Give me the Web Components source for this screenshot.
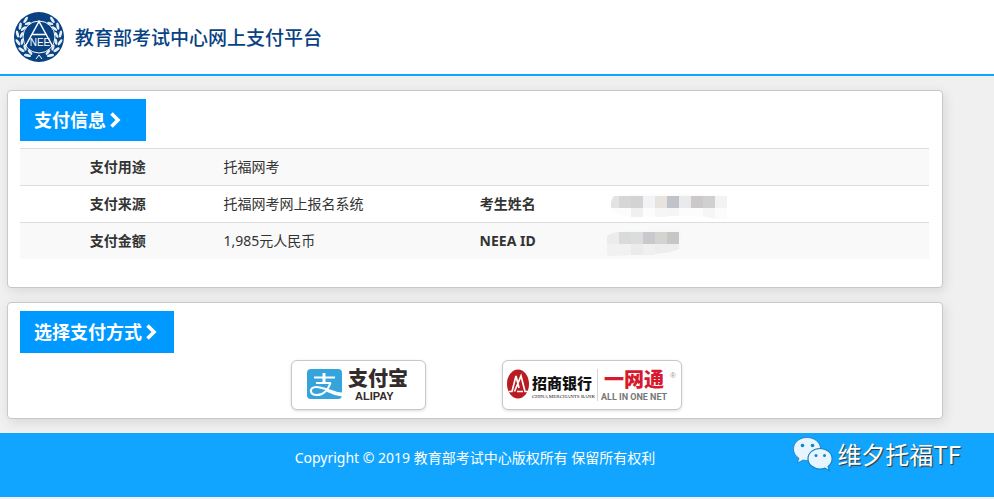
<!DOCTYPE html>
<html lang="zh-CN">
<head>
<meta charset="utf-8">
<meta name="viewport" content="width=device-width, initial-scale=1">
<title>教育部考试中心网上支付平台</title>
<style>
    body {
        margin: 0;
        background: #f0f0f0;
        color: #333;
        font: 14px/20px "Noto Sans", "Noto Sans CJK SC", sans-serif;
    }

    main {
        display: grid;
        gap: 14px;
        padding: 14px 51px 14px 7px;
    }
</style>
</head>
<body>
    <site-header>教育部考试中心网上支付平台</site-header>
    <main>
        <pay-panel heading="支付信息">
            <pay-details></pay-details>
        </pay-panel>
        <pay-panel heading="选择支付方式">
            <pay-methods></pay-methods>
        </pay-panel>
    </main>
    <site-footer>
        Copyright © 2019 教育部考试中心版权所有 保留所有权利
        <wechat-mark slot="mark">维夕托福TF</wechat-mark>
    </site-footer>

<script>
class BaseElement extends HTMLElement {
    constructor() {
        super();
        this.attachShadow({ mode: 'open' });
    }

    connectedCallback() {
        this.shadowRoot.innerHTML = this.template();
    }
}

class SiteHeader extends BaseElement {
    // one side of the wreath, the other side is mirrored
    leaves() {
        let out = '';
        for (let i = 0; i < 6; i++) {
            const angle = 24 + i * 22;
            out += `<g transform="rotate(${angle} 25 25)">
                <ellipse cx="23" cy="42.500" rx="3.200" ry="1.300" transform="rotate(28 23 42.500)"/>
                <ellipse cx="22" cy="46.500" rx="3.600" ry="1.400" transform="rotate(-12 22 46.500)"/>
            </g>`;
        }
        return out;
    }

    template() {
        return `
            <style>
                :host {
                    display: block;
                    background: #fff;
                    border-bottom: 2px solid #12a5ff;
                }

                .brand {
                    display: flex;
                    align-items: center;
                    gap: 11px;
                    padding: 12px 14px;
                    color: #084282;
                }

                h1 {
                    margin: 0;
                    font-size: 19px;
                    line-height: 28px;
                    font-weight: 500;
                    font-family: "Noto Sans CJK SC", sans-serif;
                }

                svg {
                    display: block;
                }
            </style>
            <div class="brand">
                <svg width="50" height="50" viewBox="0 0 50 50" aria-hidden="true">
                    <circle cx="25" cy="25" r="25" fill="#084282"/>
                    <g fill="#e6eef5">
                        ${this.leaves()}
                        <g transform="translate(50 0) scale(-1 1)">${this.leaves()}</g>
                    </g>
                    <g fill="none" stroke="#fff">
                        <circle cx="25" cy="25" r="16" fill="#084282" stroke-width="1"/>
                        <path d="M11.500 34L25 9.500l13.500 24.500M18.500 22.500h13" stroke-width="1.500"/>
                        <path d="M22 47l3-4 3 4" stroke-width="1"/>
                    </g>
                    <text x="26" y="34" text-anchor="middle" fill="#fff" font-family="Liberation Sans, sans-serif" font-size="10">NEE</text>
                </svg>
                <h1><slot></slot></h1>
            </div>
        `;
    }
}

class PayPanel extends BaseElement {
    template() {
        const heading = this.getAttribute('heading') || '';

        return `
            <style>
                :host {
                    display: block;
                    padding: 8px 13px 8px 12px;
                    background: #fff;
                    border: 1px solid #c8c8c8;
                    border-radius: 4px;
                    box-shadow: 2px 3px 12px rgba(0, 0, 0, 0.1);
                }

                h2 {
                    display: flex;
                    align-items: center;
                    gap: 3px;
                    box-sizing: border-box;
                    width: fit-content;
                    min-width: 126px;
                    height: 42px;
                    margin: 0 0 7px;
                    padding: 0 17px 0 14px;
                    background: #09f;
                    color: #fff;
                    font-size: 18px;
                    line-height: 24px;
                    font-weight: bold;
                    white-space: nowrap;
                }
            </style>
            <h2>
                <span>${heading}</span>
                <svg width="12" height="18" viewBox="0 0 12 18" aria-hidden="true">
                    <path d="M2.500 2.500L9 9l-6.500 6.500" fill="none" stroke="#fff" stroke-width="3.600"/>
                </svg>
            </h2>
            <slot></slot>
        `;
    }
}

class PayDetails extends BaseElement {
    template() {
        return `
            <style>
                :host {
                    display: block;
                    margin-bottom: 20px;
                }

                table {
                    width: 100%;
                    border-spacing: 0;
                    table-layout: fixed;
                }

                .label { width: 21.5%; }
                .value { width: 22%; }
                .label2 { width: 20.3%; }

                th, td {
                    height: 20px;
                    padding: 8px;
                    border-top: 1px solid #ddd;
                }

                th { text-align: center; }
                td { text-align: left; }
                tr:nth-child(odd) { background: #f9f9f9; }
                td.masked { padding: 0; }
                svg { display: block; }
            </style>
            <table>
                <colgroup>
                    <col class="label"><col class="value"><col class="label2"><col>
                </colgroup>
                <tbody>
                    <tr>
                        <th scope="row">支付用途</th>
                        <td colspan="3">托福网考</td>
                    </tr>
                    <tr>
                        <th scope="row">支付来源</th>
                        <td>托福网考网上报名系统</td>
                        <th scope="row">考生姓名</th>
                        <td class="masked">
                            <svg width="140" height="36" viewBox="0 0 140 36" aria-hidden="true">
                                <path d="M12 10q50-5 103-1l12 1v24l-12-1-20-3H30q-18 0-19-10 0-7 4-10z" fill="#fcfcfc"/>
                                <path d="M14 10h5v12h-8q-1-8 3-12z" fill="#e4e2e2"/>
                                <path d="M19 10h12v12H19z" fill="#d5d7d7"/>
                                <path d="M31 10h12v12H31z" fill="#d3d3d3"/>
                                <path d="M43 10h12v12H43z" fill="#f1f3f5"/>
                                <path d="M55 10h12v12H55z" fill="#e8e3df"/>
                                <path d="M67 10h12v12H67z" fill="#c0c3c7"/>
                                <path d="M79 10h12v12H79z" fill="#e9eaec"/>
                                <path d="M91 10h12v12H91z" fill="#cbcac9"/>
                                <path d="M103 10h12v12h-12z" fill="#d0d0d1"/>
                                <path d="M115 10h12v12h-12z" fill="#f2f3f5"/>
                                <path d="M31 22h12v9H31z" fill="#f0f0f0"/>
                                <path d="M55 22h12v9H55zM103 22h12v11l-12-3z" fill="#f6f6f4"/>
                                <path d="M67 22h12v8H67z" fill="#f4f5f6"/>
                            </svg>
                        </td>
                    </tr>
                    <tr>
                        <th scope="row">支付金额</th>
                        <td>1,985元人民币</td>
                        <th scope="row">NEEA ID</th>
                        <td class="masked">
                            <svg width="140" height="36" viewBox="0 0 140 36" aria-hidden="true">
                                <path d="M12 10q30-5 67-4l3 4-3 12H12z" fill="#f7f7f7"/>
                                <path d="M7 21v-6q0-5 12-6v12z" fill="#ececeb"/>
                                <path d="M19 9h12v12H19z" fill="#d7dbdb"/>
                                <path d="M31 9h12v12H31z" fill="#dcdcdc"/>
                                <path d="M43 9h12v12H43z" fill="#c9c8cd"/>
                                <path d="M55 9h12v12H55z" fill="#d3d3d0"/>
                                <path d="M67 9h12v12H67z" fill="#c6c6c7"/>
                                <path d="M7 21h24v11l-21 1q-3 0-3-4z" fill="#f0f1f0"/>
                                <path d="M31 21h12v11H31z" fill="#ebebeb"/>
                                <path d="M43 21h12v11H43z" fill="#f0f0f1"/>
                                <path d="M55 21h24v5q-8 4-24 5z" fill="#eeedee"/>
                            </svg>
                        </td>
                    </tr>
                </tbody>
            </table>
        `;
    }
}

class PayMethods extends BaseElement {
    template() {
        return `
            <style>
                :host {
                    display: flex;
                    justify-content: center;
                    gap: 76px;
                    padding-left: 24px;
                }

                button {
                    height: 50px;
                    padding: 0;
                    background: #fff;
                    border: 1px solid #c8c8c8;
                    border-radius: 6px;
                    box-shadow: 0 1px 3px rgba(0, 0, 0, 0.15);
                    cursor: pointer;
                }

                svg { display: block; }
                .cjk { font-family: "Liberation Sans", "Noto Sans CJK SC", sans-serif; font-weight: 900; }
                .sans { font-family: "Liberation Sans", sans-serif; font-weight: bold; }
                .narrow { font-family: Roboto, sans-serif; font-weight: bold; }
                .serif { font-family: "Liberation Serif", serif; }
            </style>
            <button type="button" aria-label="支付宝 ALIPAY">
                <svg width="133" height="48" viewBox="0 0 133 48">
                    <rect x="15" y="8" width="35" height="30" rx="4" fill="#35a3dc"/>
                    <g fill="none" stroke="#fff">
                        <path d="M22 16.500h21M24 22h15" stroke-width="1.800"/>
                        <path d="M32 12v9.500" stroke-width="3"/>
                        <path d="M38.500 22C36 29 31 34 25 34c-8 0-8-8-1-8 7 0 14 4 26 7.500" stroke-width="2.200"/>
                    </g>
                    <path d="M36 28.500q6 2.500 14 3v4q-8-1-16-5z" fill="#fff"/>
                    <text class="cjk" x="56" y="25" font-size="20" fill="#332c2b">支付宝</text>
                    <text class="sans" x="63" y="39" font-size="11" fill="#332c2b">ALIPAY</text>
                </svg>
            </button>
            <button type="button" aria-label="招商银行 一网通">
                <svg width="178" height="48" viewBox="0 0 178 48">
                    <ellipse cx="15" cy="23" rx="11" ry="14.500" fill="#b81c22"/>
                    <path d="M5.500 30.500h3.500L13 15l3 12M11.500 30.500L18 15l4 15.500h3M14 30.500h6" fill="none" stroke="#fff" stroke-width="1.700"/>
                    <text class="cjk" x="29" y="28" font-size="15" fill="#111">招商银行</text>
                    <text class="serif" x="29" y="37" font-size="5" fill="#111">CHINA MERCHANTS BANK</text>
                    <path d="M94.500 8v32" stroke="#d5d5d5"/>
                    <text class="cjk" x="101" y="26" font-size="20" fill="#d7192d">一网通</text>
                    <text class="narrow" x="98" y="39" font-size="9" fill="#777">ALL IN ONE NET</text>
                    <text class="sans" x="167" y="17" font-size="8" fill="#999" style="font-weight: normal">®</text>
                </svg>
            </button>
        `;
    }
}

class SiteFooter extends BaseElement {
    template() {
        return `
            <style>
                :host {
                    display: block;
                    position: relative;
                    padding: 15px 51px 29px 7px;
                    background: #12a5ff;
                    color: #fff;
                    text-align: center;
                }

                p { margin: 0; }

                /* floats over the right end of the bar */
                ::slotted([slot="mark"]) {
                    position: absolute;
                    top: 1px;
                    right: 33px;
                }
            </style>
            <p><slot></slot></p>
            <slot name="mark"></slot>
        `;
    }
}

class WechatMark extends BaseElement {
    template() {
        return `
            <style>
                :host {
                    display: flex;
                    align-items: center;
                    gap: 4px;
                    color: #fff;
                    font: 24px/40px "Noto Sans CJK SC", sans-serif;
                    text-shadow: 1px 1px 1px #333;
                    white-space: nowrap;
                }

                svg { display: block; }
            </style>
            <svg width="40" height="36" viewBox="0 0 40 36" aria-hidden="true">
                <g fill="#e6f5ff" stroke="#1c6294" stroke-width=".6">
                    <path d="M14 1.500C6.500 1.500.5 6.500.5 13c0 4 2 7 5.500 9.300L4.500 27l5.500-3c8 2 17.500-2 17.500-11 0-6.500-6-11.500-13.500-11.500z"/>
                    <path d="M27 12.500c-6.500 0-12 4.300-12 10.200s5.500 10.300 12 10.300c2 0 3.500-.3 5-.9l4.300 2.600-1.200-4.200c2.500-1.900 4-4.700 4-7.800 0-5.900-5.600-10.200-12.100-10.200z" stroke="#1484c8" stroke-width="1.200"/>
                </g>
                <g fill="#1484c8">
                    <circle cx="9.500" cy="9.500" r="1.800"/>
                    <circle cx="19.500" cy="9.500" r="1.800"/>
                    <circle cx="23" cy="19.500" r="1.500"/>
                    <circle cx="31.500" cy="19.500" r="1.500"/>
                </g>
            </svg>
            <slot></slot>
        `;
    }
}

customElements.define('site-header', SiteHeader);
customElements.define('pay-panel', PayPanel);
customElements.define('pay-details', PayDetails);
customElements.define('pay-methods', PayMethods);
customElements.define('site-footer', SiteFooter);
customElements.define('wechat-mark', WechatMark);
</script>
</body>
</html>
